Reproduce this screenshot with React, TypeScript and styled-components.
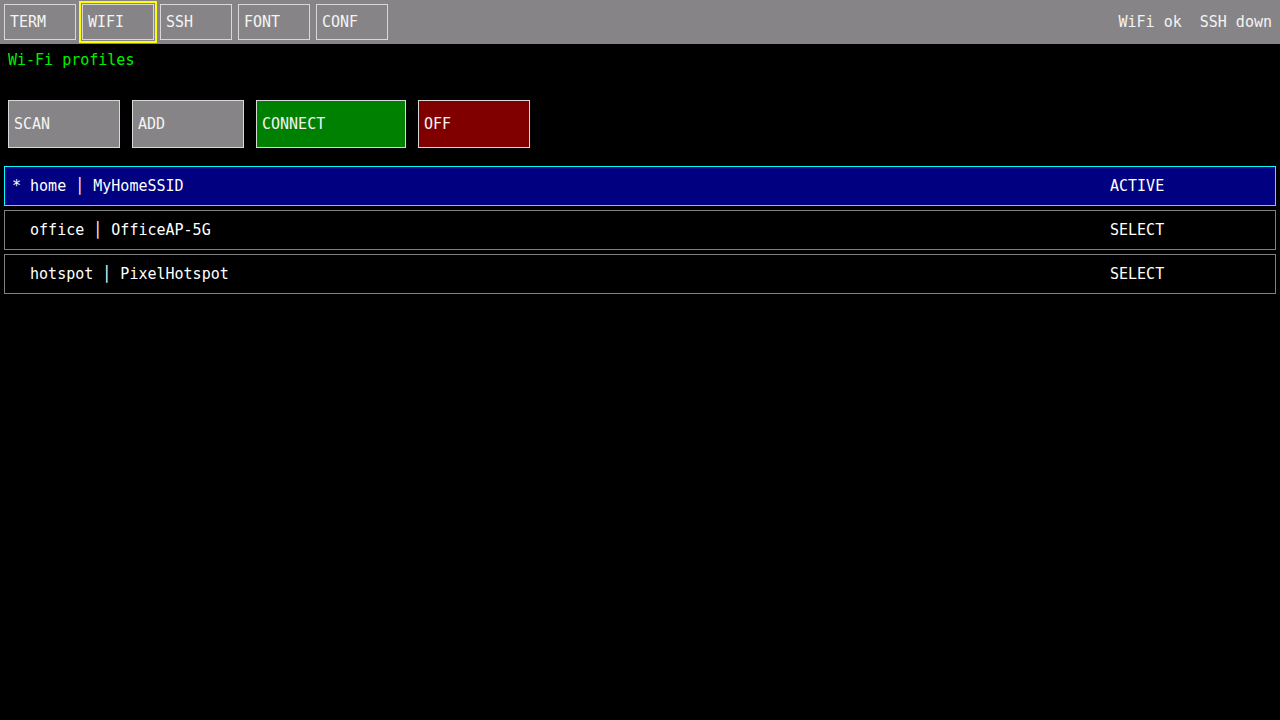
import styled, { createGlobalStyle } from "styled-components";

type Profile = { name: string; ssid: string; active: boolean };

const profiles: Profile[] = [
  { name: "home", ssid: "MyHomeSSID", active: true },
  { name: "office", ssid: "OfficeAP-5G", active: false },
  { name: "hotspot", ssid: "PixelHotspot", active: false },
];

const tabs = ["TERM", "WIFI", "SSH", "FONT", "CONF"];

const GlobalStyle = createGlobalStyle`
  html, body {
    margin: 0;
    background: #000;
    color: #fff;
    font-family: "DejaVu Sans Mono", "Liberation Mono", monospace;
    font-size: 15px;
  }
  * { box-sizing: border-box; }
`;

const Screen = styled.div`
  width: 1280px;
  height: 720px;
  background: #000;
  overflow: hidden;
`;

const TopBar = styled.div`
  height: 44px;
  background: #868486;
  display: flex;
  align-items: center;
  padding: 0 8px 0 4px;
`;

const Tabs = styled.div`
  display: flex;
  gap: 6px;
`;

const Tab = styled.div<{ $current?: boolean }>`
  width: 72px;
  height: 36px;
  border: 1px solid #d8d8d8;
  padding-left: 5px;
  display: flex;
  align-items: center;
  color: #f4f4f4;
  outline: ${({ $current }) => ($current ? "2px solid #ffff00" : "none")};
  outline-offset: 1px;
`;

const Status = styled.div`
  margin-left: auto;
  display: flex;
  gap: 18px;
  color: #f4f4f4;
`;

const Body = styled.div`
  padding: 4px 4px 0;
`;

const Heading = styled.div`
  color: #00f000;
  padding: 3px 4px 0;
  height: 48px;
`;

const Actions = styled.div`
  display: flex;
  gap: 12px;
  padding: 4px 4px 0;
`;

const Action = styled.div<{ $bg: string; $w: number }>`
  width: ${({ $w }) => $w}px;
  height: 48px;
  background: ${({ $bg }) => $bg};
  border: 1px solid #d8d8d8;
  padding-left: 5px;
  display: flex;
  align-items: center;
  color: #f4f4f4;
`;

const List = styled.div`
  margin-top: 18px;
  display: flex;
  flex-direction: column;
  gap: 4px;
`;

const Row = styled.div<{ $active: boolean }>`
  height: 40px;
  display: grid;
  grid-template-columns: 1fr 158px;
  align-items: center;
  padding: 0 7px 1px;
  background: ${({ $active }) => ($active ? "#000080" : "#000")};
  border: 1px solid ${({ $active }) => ($active ? "#00ffff" : "#808080")};
  color: #fff;
  white-space: pre;
`;

const App = () => (
  <Screen>
    <GlobalStyle />
    <TopBar>
      <Tabs>
        {tabs.map((t) => (
          <Tab key={t} $current={t === "WIFI"}>
            {t}
          </Tab>
        ))}
      </Tabs>
      <Status>
        <span>WiFi ok</span>
        <span>SSH down</span>
      </Status>
    </TopBar>
    <Body>
      <Heading>Wi-Fi profiles</Heading>
      <Actions>
        <Action $bg="#868486" $w={112}>SCAN</Action>
        <Action $bg="#868486" $w={112}>ADD</Action>
        <Action $bg="#008000" $w={150}>CONNECT</Action>
        <Action $bg="#800000" $w={112}>OFF</Action>
      </Actions>
      <List>
        {profiles.map((p) => (
          <Row key={p.name} $active={p.active}>
            <span>{`${p.active ? "*" : " "} ${p.name} │ ${p.ssid}`}</span>
            <span>{p.active ? "ACTIVE" : "SELECT"}</span>
          </Row>
        ))}
      </List>
    </Body>
  </Screen>
);

export default App;
